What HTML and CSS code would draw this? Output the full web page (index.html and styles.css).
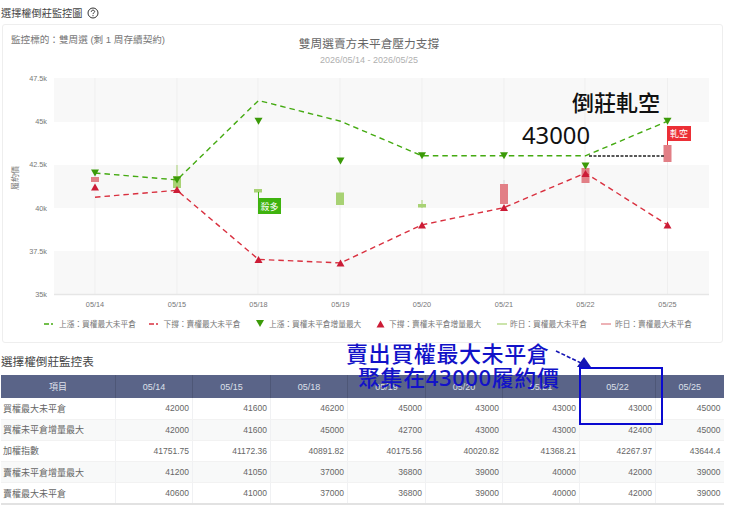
FILE: index.html
```html
<!DOCTYPE html>
<html lang="zh-Hant">
<head>
    <meta charset="UTF-8">
    <meta name="viewport" content="width=device-width, initial-scale=1.0">
    <title>選擇權倒莊監控</title>
    <link rel="stylesheet" href="styles.css">
</head>
<body>
<div class="page">
    <!-- 監控圖 -->
    <div class="section-title first">
        選擇權倒莊監控圖
        <svg class="help" width="12" height="12" viewBox="0 0 12 12">
            <circle cx="6" cy="6" r="5" fill="none" stroke="#333" stroke-width="1"/>
            <path d="M4.3 4.8 C4.3 3.6 5.1 3.2 6 3.2 C7 3.2 7.7 3.8 7.7 4.6 C7.7 5.7 6 5.7 6 7.1" fill="none" stroke="#333" stroke-width="1"/>
            <circle cx="6" cy="8.7" r="0.6" fill="#333"/>
        </svg>
    </div>
    <div class="card">
        <svg class="chart" width="719" height="317" viewBox="3 25 719 317">
            <defs>
                <path id="tri-down" d="M-4 -3.5 L4 -3.5 L0 3.5 Z"/>
                <path id="tri-up" d="M-4 3.5 L4 3.5 L0 -3.5 Z"/>
            </defs>

            <text class="target" x="11" y="43">監控標的：雙周選 (剩 1 周存續契約)</text>
            <text class="chart-title" x="369" y="48">雙周選賣方未平倉壓力支撐</text>
            <text class="chart-sub" x="369" y="63">2026/05/14 - 2026/05/25</text>

            <!-- 背景條紋 -->
            <rect class="band" x="54" y="78" width="655" height="44"/>
            <rect class="band" x="54" y="165" width="655" height="43"/>
            <rect class="band" x="54" y="251" width="655" height="43"/>
            <path class="grid" d="M95 78V294 M177 78V294 M258 78V294 M340 78V294 M422 78V294 M504 78V294 M585 78V294 M667.5 78V294"/>
            <path class="axis" d="M54 294.5H709"/>

            <!-- Y 軸 -->
            <text class="tick end" x="47" y="81">47.5k</text>
            <text class="tick end" x="47" y="124">45k</text>
            <text class="tick end" x="47" y="167">42.5k</text>
            <text class="tick end" x="47" y="211">40k</text>
            <text class="tick end" x="47" y="254">37.5k</text>
            <text class="tick end" x="47" y="297">35k</text>
            <text class="axis-name" transform="translate(18 178) rotate(-90)">履約價</text>

            <!-- X 軸 -->
            <text class="tick" x="95" y="307">05/14</text>
            <text class="tick" x="177" y="307">05/15</text>
            <text class="tick" x="258.5" y="307">05/18</text>
            <text class="tick" x="340.5" y="307">05/19</text>
            <text class="tick" x="422" y="307">05/20</text>
            <text class="tick" x="504" y="307">05/21</text>
            <text class="tick" x="585.5" y="307">05/22</text>
            <text class="tick" x="667.5" y="307">05/25</text>

            <!-- K 棒：昨日 -->
            <rect class="candle-red" x="91" y="177" width="8" height="5"/>
            <path class="wick-green" d="M177 165V188"/>
            <rect class="candle-green" x="173" y="176" width="8" height="12"/>
            <rect class="candle-green" x="254" y="189" width="8" height="3.5"/>
            <rect class="candle-green" x="336" y="192.5" width="8" height="12.5"/>
            <path class="wick-green" d="M422 200V208"/>
            <rect class="candle-green" x="418" y="204" width="8" height="3.5"/>
            <path class="wick-red" d="M504 180V204"/>
            <rect class="candle-red" x="500" y="184" width="8" height="20"/>
            <rect class="candle-red" x="581.5" y="168" width="8" height="15"/>
            <rect class="candle-red" x="663.5" y="145" width="8" height="17"/>

            <!-- 未平倉虛線 -->
            <polyline class="line-up" points="95,173 177,179.9 258.5,100.5 340.5,121.2 422,155.8 504,155.8 585.5,155.8 667.5,121.2"/>
            <polyline class="line-down" points="95,197.2 177,190.3 258.5,259.4 340.5,262.9 422,224.9 504,207.6 585.5,173 667.5,224.9"/>

            <!-- 增量最大 -->
            <g class="mark-up">
                <use href="#tri-down" x="95" y="173"/>
                <use href="#tri-down" x="177" y="179.9"/>
                <use href="#tri-down" x="258.5" y="121.2"/>
                <use href="#tri-down" x="340.5" y="160.9"/>
                <use href="#tri-down" x="422" y="155.8"/>
                <use href="#tri-down" x="504" y="155.8"/>
                <use href="#tri-down" x="585.5" y="166.1"/>
                <use href="#tri-down" x="667.5" y="121.2"/>
            </g>
            <g class="mark-down">
                <use href="#tri-up" x="95" y="186.9"/>
                <use href="#tri-up" x="177" y="189.5"/>
                <use href="#tri-up" x="258.5" y="259.4"/>
                <use href="#tri-up" x="340.5" y="262.9"/>
                <use href="#tri-up" x="422" y="224.9"/>
                <use href="#tri-up" x="504" y="207.6"/>
                <use href="#tri-up" x="585.5" y="173.5"/>
                <use href="#tri-up" x="667.5" y="224.9"/>
            </g>

            <!-- 標籤 -->
            <path class="wick-badge-green" d="M258.5 192V200"/>
            <rect class="badge-green" x="258" y="198" width="23" height="16"/>
            <text class="badge-text" x="269.5" y="209.5">殺多</text>
            <path class="wick-badge-red" d="M667.5 140V145"/>
            <rect class="badge-red" x="667" y="126" width="24" height="15"/>
            <text class="badge-text" x="679" y="137">軋空</text>

            <!-- 手繪標註 -->
            <path class="note-dash" d="M589 156H665"/>
            <text class="note-big" x="572" y="111">倒莊軋空</text>
            <text class="note-num" x="522" y="144">43000</text>

            <!-- 圖例 -->
            <path class="legend-up" d="M44 324H54"/>
            <text class="legend" x="59" y="327">上漲：買權最大未平倉</text>
            <path class="legend-down" d="M149 324H159"/>
            <text class="legend" x="163.5" y="327">下撐：賣權最大未平倉</text>
            <use class="mark-up" href="#tri-down" x="260" y="323.5"/>
            <text class="legend" x="269" y="327">上漲：買權未平倉增量最大</text>
            <use class="mark-down" href="#tri-up" x="380.5" y="324"/>
            <text class="legend" x="389" y="327">下撐：賣權未平倉增量最大</text>
            <path class="legend-y-green" d="M497 324H507"/>
            <text class="legend" x="510" y="327">昨日：買權最大未平倉</text>
            <path class="legend-y-red" d="M601 324H611"/>
            <text class="legend" x="615" y="327">昨日：賣權最大未平倉</text>
        </svg>
    </div>

    <!-- 監控表 -->
    <div class="section-title second">選擇權倒莊監控表</div>
    <table class="monitor">
        <colgroup>
            <col class="col-name"><col class="col-a"><col class="col-b"><col class="col-a"><col class="col-b">
            <col class="col-a"><col class="col-a"><col class="col-c"><col class="col-d">
        </colgroup>
        <thead>
            <tr><th>項目</th><th>05/14</th><th>05/15</th><th>05/18</th><th>05/19</th><th>05/20</th><th>05/21</th><th>05/22</th><th>05/25</th></tr>
        </thead>
        <tbody>
            <tr><td>買權最大未平倉</td><td>42000</td><td>41600</td><td>46200</td><td>45000</td><td>43000</td><td>43000</td><td>43000</td><td>45000</td></tr>
            <tr><td>買權未平倉增量最大</td><td>42000</td><td>41600</td><td>45000</td><td>42700</td><td>43000</td><td>43000</td><td>42400</td><td>45000</td></tr>
            <tr><td>加權指數</td><td>41751.75</td><td>41172.36</td><td>40891.82</td><td>40175.56</td><td>40020.82</td><td>41368.21</td><td>42267.97</td><td>43644.4</td></tr>
            <tr><td>賣權未平倉增量最大</td><td>41200</td><td>41050</td><td>37000</td><td>36800</td><td>39000</td><td>40000</td><td>42000</td><td>39000</td></tr>
            <tr><td>賣權最大未平倉</td><td>40600</td><td>41000</td><td>37000</td><td>36800</td><td>39000</td><td>40000</td><td>42000</td><td>39000</td></tr>
        </tbody>
    </table>

    <!-- 藍色標註，壓在卡片與表格上 -->
    <div class="blue-note line-one">賣出買權最大未平倉</div>
    <div class="blue-note line-two">聚集在43000履約價</div>
    <div class="blue-box"></div>
    <svg class="blue-arrow" width="40" height="24" viewBox="0 0 40 24">
        <path d="M1 1 L26 13" fill="none" stroke="#1414b4" stroke-width="1.6" stroke-dasharray="4 2"/>
        <path d="M22 17 L29 7 L36 17 Z" fill="#1414b4"/>
    </svg>
</div>
</body>
</html>
```

FILE: styles.css
```css
:root{
    --text-color: #666;
    --title-color: #444;
    --green: #44aa11;
    --red: #d9303f;
    --candle-green: #a8d274;
    --candle-red: #e27f86;
    --blue: #1212c8;
}
body {
    margin: 0;
    background-color: #fff;
    color: var(--text-color);
    font-family: "Liberation Sans", "Noto Sans CJK TC", sans-serif;
}
.page{
    position: relative;
    width: 740px;
    height: 508px;
    overflow: hidden;
}
.section-title{
    padding-left: 1px;
    color: var(--title-color);
    display: flex;
    align-items: center;
    gap: 4px;
}
.first{
    height: 24px;
    padding-top: 1px;
    box-sizing: border-box;
    font-size: 10.2px;
}
.second{
    height: 32px;
    padding-top: 4px;
    box-sizing: border-box;
    font-size: 11.6px;
}
.help{
    flex: 0 0 auto;
}
.card{
    box-sizing: border-box;
    width: 721px;
    height: 319px;
    margin-left: 2px;
    border: 1px solid #eee;
    border-radius: 3px;
}
.chart{
    display: block;
}
.chart text{
    font-family: "Liberation Sans", "Noto Sans CJK TC", sans-serif;
}
.chart .target{
    font-size: 9.6px;
    fill: #777;
}
.chart .chart-title{
    font-size: 11.7px;
    fill: #666;
    text-anchor: middle;
}
.chart .chart-sub{
    font-size: 9px;
    fill: #b0b0b0;
    text-anchor: middle;
}
.band{
    fill: #f8f8f8;
}
.grid{
    stroke: #efefef;
    stroke-width: 1;
    fill: none;
}
.axis{
    stroke: #e6e6e6;
    stroke-width: 1.5;
}
.chart .tick{
    font-size: 7.3px;
    fill: #777;
    text-anchor: middle;
}
.chart .tick.end{
    text-anchor: end;
}
.chart .axis-name{
    font-size: 8px;
    fill: #777;
    text-anchor: middle;
}
.candle-red{
    fill: var(--candle-red);
}
.candle-green{
    fill: var(--candle-green);
}
.wick-green{
    stroke: var(--candle-green);
    fill: none;
}
.wick-red{
    stroke: #d8d8d8;
    fill: none;
}
.line-up, .line-down{
    fill: none;
    stroke-width: 1.4;
    stroke-dasharray: 5.5 4;
}
.line-up{
    stroke: var(--green);
}
.line-down{
    stroke: var(--red);
}
.mark-up{
    fill: #3b9a08;
}
.mark-down{
    fill: #cc1c36;
}
.badge-green{
    fill: #3fb30f;
}
.badge-red{
    fill: #ec2f36;
}
.wick-badge-green{
    stroke: #3fb30f;
    fill: none;
}
.wick-badge-red{
    stroke: #ec2f36;
    fill: none;
}
.chart .badge-text{
    font-size: 9px;
    fill: #fff;
    text-anchor: middle;
}
.note-dash{
    stroke: #222;
    stroke-width: 1.3;
    stroke-dasharray: 3 1.5;
    fill: none;
}
.chart .note-big{
    font-size: 22px;
    font-weight: 500;
    fill: #111;
}
.chart .note-num{
    font-family: "Noto Sans", sans-serif;
    font-size: 23.8px;
    fill: #111;
}
.chart .legend{
    font-size: 7.7px;
    fill: #777;
}
.legend-up, .legend-down{
    fill: none;
    stroke-width: 1.4;
    stroke-dasharray: 5 2 2 20;
}
.legend-up{
    stroke: var(--green);
}
.legend-down{
    stroke: var(--red);
}
.legend-y-green{
    stroke: var(--candle-green);
    stroke-width: 1.2;
}
.legend-y-red{
    stroke: var(--candle-red);
    stroke-width: 1.2;
}
.monitor{
    width: 722px;
    margin-left: 1px;
    table-layout: fixed;
    border-collapse: collapse;
    border-bottom: 2px solid #e2e2e2;
}
.col-name{ width: 114.5px; }
.col-a{ width: 77px; }
.col-b{ width: 78px; }
.col-c{ width: 76px; }
.col-d{ width: 68px; }
.monitor th{
    height: 23px;
    padding: 0;
    background-color: #5a6488;
    border-right: 1px solid #4e5777;
    color: #dde0ea;
    font-size: 9px;
    font-weight: normal;
    text-align: center;
}
.monitor th:last-child{
    border-right: 0;
}
.monitor td{
    height: 21.2px;
    padding: 0 3px 0 2px;
    border-right: 1px solid #f0f1f3;
    border-bottom: 1px solid #f2f2f2;
    box-sizing: border-box;
    font-size: 8.5px;
    text-align: right;
}
.monitor td:first-child{
    font-size: 9px;
    text-align: left;
}
.monitor td:last-child{
    border-right: 0;
}
.monitor tbody tr:nth-child(even){
    background-color: #f8f9f9;
}
.blue-note{
    position: absolute;
    color: var(--blue);
    font-size: 22px;
    font-weight: 500;
    line-height: 24px;
    white-space: nowrap;
}
.line-one{
    left: 346px;
    top: 343px;
    letter-spacing: 0.6px;
}
.line-two{
    left: 358px;
    top: 365px;
    font-family: "Noto Sans", "Noto Sans CJK TC", sans-serif;
    letter-spacing: 0.6px;
}
.blue-box{
    position: absolute;
    left: 579px;
    top: 367px;
    width: 80px;
    height: 54px;
    border: 2px solid #0a0ad0;
}
.blue-arrow{
    position: absolute;
    left: 555px;
    top: 350px;
}
```
